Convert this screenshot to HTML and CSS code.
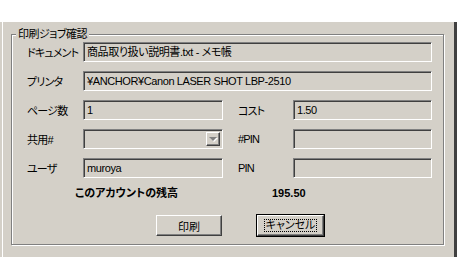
FILE: index.html
```html
<!DOCTYPE html>
<html lang="ja">
<head>
  <meta charset="UTF-8" />
  <title>印刷ジョブ確認</title>
  <link rel="stylesheet" href="styles.css">
</head>
<body>
  <div class="window">
    <div class="group">
      <span class="legend">印刷ジョブ確認</span>

      <div class="form">
        <label class="lbl">ドキュメント</label>
        <div class="field wide">商品取り扱い説明書.txt - メモ帳</div>

        <label class="lbl">プリンタ</label>
        <div class="field wide">¥ANCHOR¥Canon LASER SHOT LBP-2510</div>

        <label class="lbl">ページ数</label>
        <div class="field">1</div>
        <label class="lbl lbl2">コスト</label>
        <div class="field">1.50</div>

        <label class="lbl">共用#</label>
        <div class="field combo">
          <span class="drop"><span class="arrow"></span></span>
        </div>
        <label class="lbl lbl2">#PIN</label>
        <div class="field"></div>

        <label class="lbl">ユーザ</label>
        <div class="field">muroya</div>
        <label class="lbl lbl2">PIN</label>
        <div class="field"></div>
      </div>

      <div class="balance">
        <span class="balance-label">このアカウントの残高</span>
        <span class="balance-value">195.50</span>
      </div>

      <div class="buttons">
        <button class="btn">印刷</button>
        <button class="btn default"><span class="focus">キャンセル</span></button>
      </div>
    </div>
  </div>
</body>
</html>
```

FILE: styles.css
```css
body {
  margin: 0;
  background: #fff;
  font-family: "Liberation Sans", "Noto Sans CJK JP", sans-serif;
  font-size: 11px;
  font-feature-settings: "palt";
  color: #000;
}

.window {
  margin-top: 22px;
  height: 232px;
  background: #d4d0c8;
  border-left: 2px solid #d4d0c8;
  border-right: 3px solid #404040;
  border-bottom: 3px solid #404040;
  box-shadow: inset 1px 0 0 #fff;
  padding-top: 12px;
  box-sizing: content-box;
}

.group {
  position: relative;
  margin-left: 9px;
  width: 433px;
  height: 211px;
  box-sizing: border-box;
  border: 1px solid #808080;
  box-shadow: inset 1px 1px 0 #fff, 1px 1px 0 #fff;
  padding: 7px 0 0 15px;
}

.legend {
  position: absolute;
  top: -9px;
  left: 4px;
  padding: 0 2px;
  background: #d4d0c8;
  line-height: 16px;
  letter-spacing: -0.5px;
}

.form {
  display: grid;
  grid-template-columns: 56px 140px 70px 139px;
  grid-auto-rows: 20px;
  row-gap: 9px;
}

.lbl {
  display: flex;
  align-items: center;
  white-space: nowrap;
  letter-spacing: -0.8px;
}

.lbl2 {
  padding-left: 15px;
}

.field {
  box-sizing: border-box;
  border-top: 1px solid #808080;
  border-left: 1px solid #808080;
  border-bottom: 1px solid #fff;
  border-right: 1px solid #fff;
  box-shadow: inset 1px 1px 0 #404040, inset -1px -1px 0 #d4d0c8;
  padding: 1px 3px 0;
  line-height: 16px;
  letter-spacing: -0.4px;
  white-space: nowrap;
  overflow: hidden;
}

.wide {
  grid-column: 2 / 5;
}

.combo {
  display: flex;
  justify-content: flex-end;
  padding: 2px;
}

.drop {
  width: 14px;
  height: 14px;
  box-sizing: border-box;
  border-top: 1px solid #fff;
  border-left: 1px solid #fff;
  border-right: 1px solid #404040;
  border-bottom: 1px solid #404040;
  box-shadow: inset -1px -1px 0 #808080;
  display: flex;
  align-items: center;
  justify-content: center;
}

.arrow {
  width: 0;
  height: 0;
  border-left: 4px solid transparent;
  border-right: 4px solid transparent;
  border-top: 4px solid #808080;
  filter: drop-shadow(1px 1px 0 #fff);
}

.balance {
  display: flex;
  margin-top: 8px;
  padding-left: 48px;
  font-weight: bold;
  line-height: 14px;
}

.balance-label {
  width: 197px;
}

.buttons {
  display: flex;
  gap: 35px;
  margin-top: 15px;
  padding-left: 129px;
}

.btn {
  width: 66px;
  height: 21px;
  padding: 0;
  font: inherit;
  color: #000;
  background: #d4d0c8;
  border-top: 1px solid #fff;
  border-left: 1px solid #fff;
  border-right: 1px solid #404040;
  border-bottom: 1px solid #404040;
  box-shadow: inset -1px -1px 0 #808080;
  display: flex;
  align-items: center;
  justify-content: center;
}

.btn.default {
  width: 67px;
  outline: 1px solid #000;
}

.focus {
  border: 1px dotted #000;
  padding: 0 1px;
  line-height: 11px;
}
```
